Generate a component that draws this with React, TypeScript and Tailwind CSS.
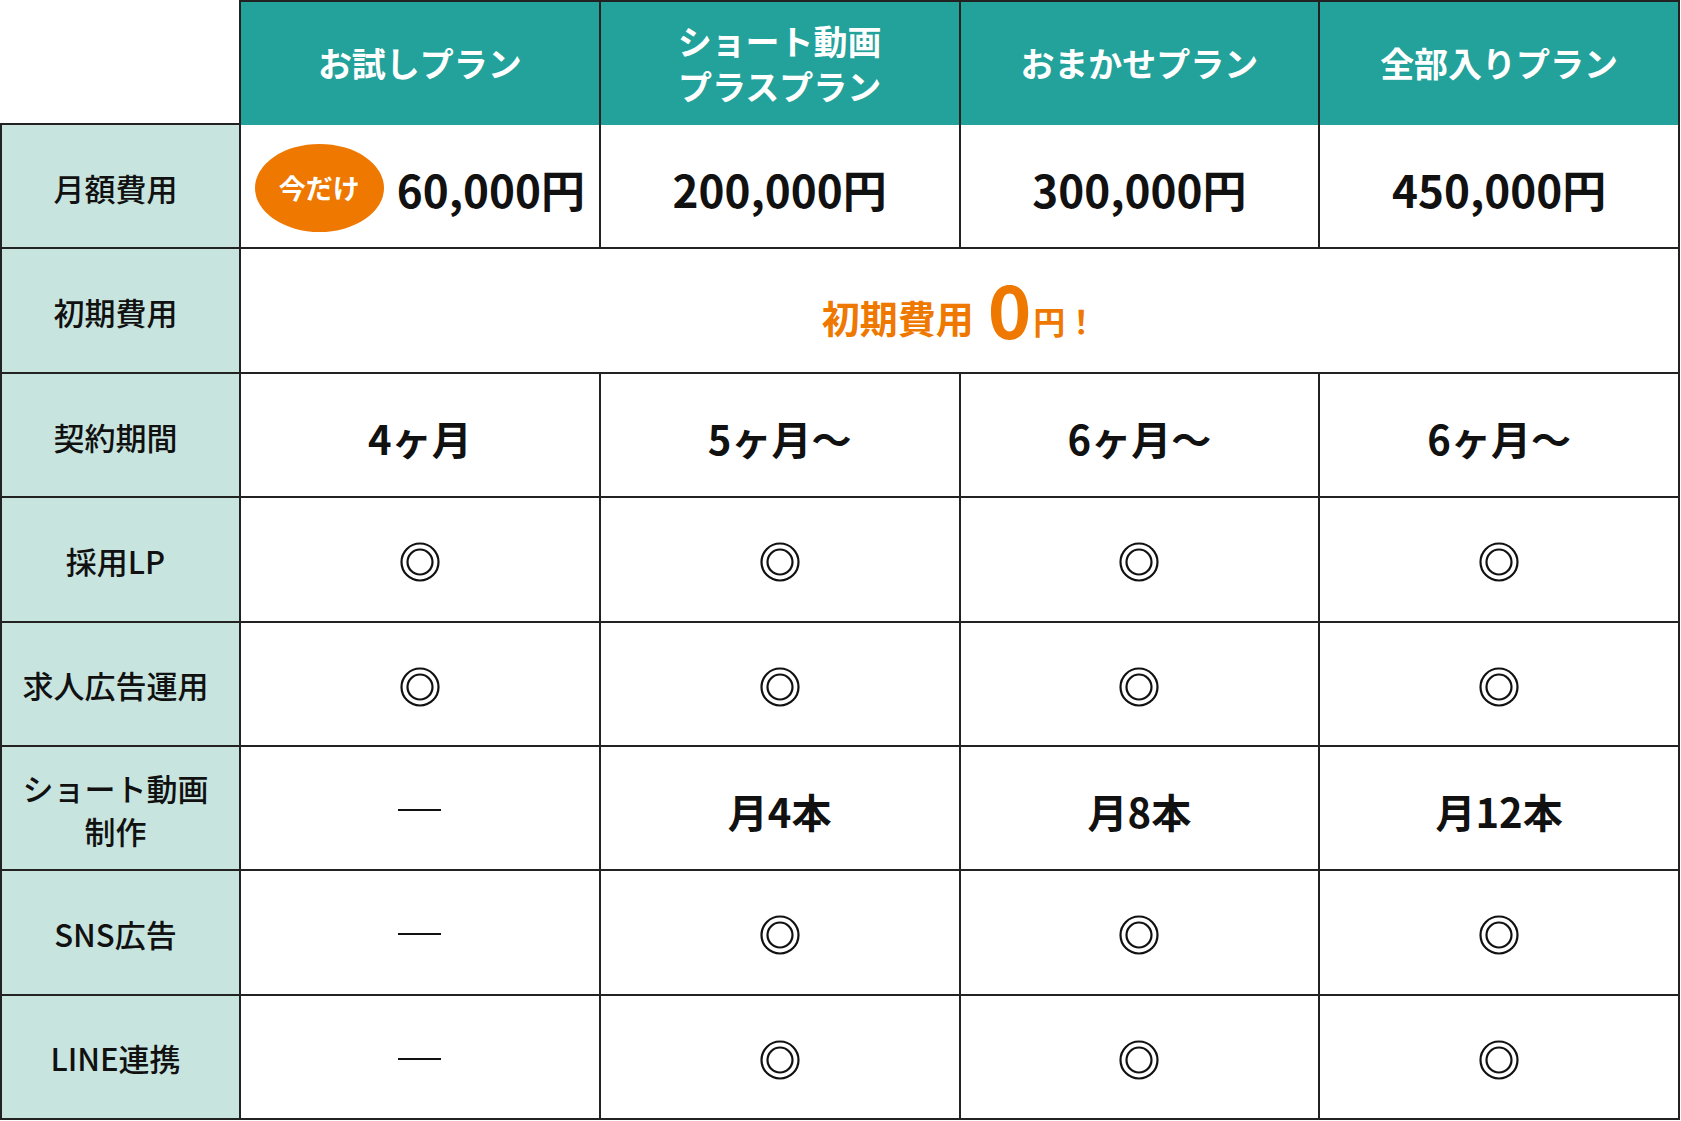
import React from 'react';

const plans = ['お試しプラン', 'ショート動画\nプラスプラン', 'おまかせプラン', '全部入りプラン'];

type Cell = 'o' | '-' | string;

const rows: { label: string; cells: Cell[] }[] = [
  { label: '契約期間', cells: ['4ヶ月', '5ヶ月〜', '6ヶ月〜', '6ヶ月〜'] },
  { label: '採用LP', cells: ['o', 'o', 'o', 'o'] },
  { label: '求人広告運用', cells: ['o', 'o', 'o', 'o'] },
  { label: 'ショート動画\n制作', cells: ['-', '月4本', '月8本', '月12本'] },
  { label: 'SNS広告', cells: ['-', 'o', 'o', 'o'] },
  { label: 'LINE連携', cells: ['-', 'o', 'o', 'o'] },
];

const font = { fontFamily: '"Noto Sans CJK JP", "Noto Sans", sans-serif' };

function DoubleCircle() {
  return (
    <svg width="40" height="40" viewBox="0 0 40 40" aria-label="◎" className="mt-[6px]">
      <circle cx="20" cy="20" r="18.5" fill="none" stroke="#111" strokeWidth="2.2" />
      <circle cx="20" cy="20" r="12.5" fill="none" stroke="#111" strokeWidth="2.2" />
    </svg>
  );
}

function Label({ text }: { text: string }) {
  return (
    <div className="flex items-center justify-center border-l-2 border-r-2 border-b-2 border-[#222] bg-[#c8e4df] pr-[10px] pt-[4px] text-center text-[31px] font-medium leading-[1.38] text-[#111] whitespace-pre-line">
      {text}
    </div>
  );
}

function Value({ value }: { value: Cell }) {
  return (
    <div className="flex items-center justify-center border-r-2 border-b-2 border-[#222] bg-white text-[#111]">
      {value === 'o' ? (
        <DoubleCircle />
      ) : value === '-' ? (
        <span className="mt-[4px] block h-[2px] w-[43px] bg-[#111]" />
      ) : (
        <span className="pt-[6px] text-[40px] font-semibold">{value}</span>
      )}
    </div>
  );
}

export default function App() {
  return (
    <div className="bg-white" style={font}>
      <div className="grid h-[1120px] w-[1680px] grid-cols-[241px_repeat(4,1fr)] grid-rows-[125px_repeat(8,1fr)]">
        {/* header */}
        <div className="border-r-2 border-b-2 border-[#222] bg-white" />
        {plans.map((p) => (
          <div
            key={p}
            className="flex items-center justify-center border-t-2 border-r-2 border-[#222] bg-[#22a29a] text-center text-[34px] font-semibold leading-[1.32] text-white whitespace-pre-line"
          >
            {p}
          </div>
        ))}

        {/* monthly fee */}
        <Label text="月額費用" />
        <div className="flex items-center justify-center gap-[13px] border-r-2 border-b-2 border-[#222] bg-white pt-[4px]">
          <span className="flex h-[88px] w-[129px] items-center justify-center rounded-[50%] bg-[#ee7800] text-[27px] font-semibold text-white">
            今だけ
          </span>
          <span className="pt-[2px] text-[44px] font-semibold text-[#111]">60,000円</span>
        </div>
        {['200,000円', '300,000円', '450,000円'].map((v) => (
          <div key={v} className="flex items-center justify-center border-r-2 border-b-2 border-[#222] bg-white pt-[6px]">
            <span className="text-[44px] font-semibold text-[#111]">{v}</span>
          </div>
        ))}

        {/* initial fee */}
        <Label text="初期費用" />
        <div className="col-span-4 flex items-end justify-center border-r-2 border-b-2 border-[#222] bg-white pb-[36px] font-semibold text-[#ee7800]">
          <span className="text-[38px] leading-none">初期費用</span>
          <span className="ml-[14px] text-[74px] leading-[0.8]">0</span>
          <span className="ml-[2px] text-[32px] leading-none">円！</span>
        </div>

        {rows.map((r) => (
          <React.Fragment key={r.label}>
            <Label text={r.label} />
            {r.cells.map((c, i) => (
              <Value key={i} value={c} />
            ))}
          </React.Fragment>
        ))}
      </div>
    </div>
  );
}
